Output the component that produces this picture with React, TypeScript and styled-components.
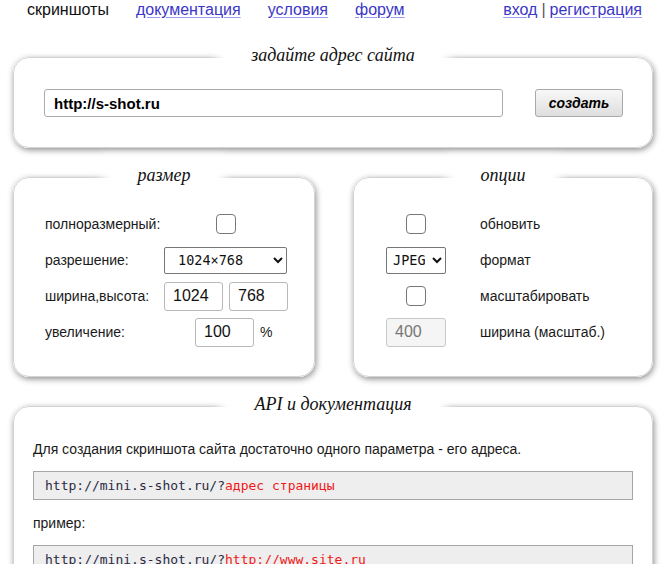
import styled, { createGlobalStyle } from "styled-components";

const GlobalStyle = createGlobalStyle`
    html, body {
        margin: 0;
        padding: 0;
        background: #fff;
    }
    body {
        font-family: "Liberation Sans", Arial, sans-serif;
        color: #111;
    }
`;

const Page = styled.div`
    margin: 0 11px 0 13px;
`;

const TopNav = styled.nav`
    display: flex;
    align-items: center;
    height: 20px;
    padding: 0 22px 0 27px;
    font-size: 16px;
    line-height: 20px;
`;

const NavGroup = styled.div`
    display: flex;
    gap: 27px;
`;

const AuthGroup = styled.div`
    margin-left: auto;
    display: flex;
    gap: 4px;
`;

const Current = styled.span`
    color: #111;
`;

const NavLink = styled.a`
    color: #3a36c8;
    text-decoration: underline;
    text-decoration-color: #9a9af0;
    text-underline-offset: 2px;
`;

const Separator = styled.span`
    color: #555;
`;

const Panel = styled.fieldset<{ $top?: number }>`
    margin: ${(p) => p.$top ?? 17}px 0 0 0;
    padding: 0;
    min-width: 0;
    border: 1px solid #d4d4d4;
    border-radius: 16px;
    box-shadow: 1px 2px 6px rgba(0, 0, 0, 0.45);
    background: #fff;
`;

const Legend = styled.legend`
    margin: 0 auto;
    padding: 0 26px 4px 26px;
    background: #fff;
    box-shadow: 0 0 10px 8px #fff;
    font-family: "Liberation Serif", "Times New Roman", serif;
    font-style: italic;
    font-size: 18px;
    line-height: 20px;
    color: #111;
`;

const UrlRow = styled.div`
    display: flex;
    gap: 32px;
    padding: 20px 29px 30px 30px;
`;

const UrlInput = styled.input`
    flex: 1;
    box-sizing: border-box;
    height: 28px;
    padding: 0 9px;
    border: 1px solid #ababab;
    border-radius: 3px;
    font-family: "Liberation Sans", Arial, sans-serif;
    font-weight: bold;
    font-size: 15px;
    color: #000;
    outline: none;
`;

const CreateButton = styled.button`
    box-sizing: border-box;
    width: 88px;
    height: 28px;
    border: 1px solid #a9a9a9;
    border-radius: 3px;
    background: linear-gradient(#f8f8f8, #dedede);
    font-family: "Liberation Sans", Arial, sans-serif;
    font-weight: bold;
    font-style: italic;
    font-size: 14px;
    color: #000;
`;

const Columns = styled.div`
    display: grid;
    grid-template-columns: 302px 300px;
    justify-content: space-between;
`;

const FormGrid = styled.div<{ $cols: string; $gap: number; $pad: number }>`
    display: grid;
    grid-template-columns: ${(p) => p.$cols};
    column-gap: ${(p) => p.$gap}px;
    grid-auto-rows: 36px;
    align-items: center;
    padding: 17px 0 26px ${(p) => p.$pad}px;
    font-size: 14px;
    color: #1a1a1a;
`;

const Cell = styled.div<{ $center?: boolean; $indent?: number }>`
    display: flex;
    align-items: center;
    gap: 6px;
    justify-content: ${(p) => (p.$center ? "center" : "flex-start")};
    padding-left: ${(p) => p.$indent ?? 0}px;
`;

const Check = styled.input.attrs({ type: "checkbox" })`
    appearance: none;
    margin: 0;
    width: 20px;
    height: 20px;
    box-sizing: border-box;
    border: 1px solid #777;
    border-radius: 4px;
    background: #fff;
`;

const Select = styled.select<{ $w: number }>`
    width: ${(p) => p.$w}px;
    height: 27px;
    margin: 0;
    padding: 0 4px 0 ${(p) => (p.$w > 100 ? 9 : 2)}px;
    border: 1px solid #767676;
    border-radius: 2px;
    background: #fff;
    font-family: "DejaVu Sans Mono", monospace;
    font-size: 13.5px;
    color: #111;
`;

const NumInput = styled.input<{ $w?: number }>`
    box-sizing: border-box;
    width: ${(p) => p.$w ?? 59}px;
    height: 29px;
    margin: 0;
    padding: 0 8px;
    border: 1px solid #b8b8b8;
    border-radius: 3px;
    background: #fff;
    font-family: "Liberation Sans", Arial, sans-serif;
    font-size: 16px;
    color: #111;
    &:disabled {
        background: #f5f5f5;
        color: #777;
        border-color: #c8c8c8;
    }
`;

const DocBody = styled.div`
    padding: 23px 19px 40px 19px;
    font-size: 14px;
    line-height: 16px;
    color: #1a1a1a;
`;

const Para = styled.p`
    margin: 0 0 14px 0;
`;

const Code = styled.div`
    margin: 0 0 15px 0;
    padding: 5px 11px;
    border: 1px solid #a6a6a6;
    background: #eeeeee;
    font-family: "DejaVu Sans Mono", monospace;
    font-size: 13px;
    line-height: 17px;
    color: #2a2a44;
`;

const Param = styled.span`
    color: #f01818;
`;

export default function App() {
    return (
        <>
            <GlobalStyle />
            <TopNav>
                <NavGroup>
                    <Current>скриншоты</Current>
                    <NavLink href="#">документация</NavLink>
                    <NavLink href="#">условия</NavLink>
                    <NavLink href="#">форум</NavLink>
                </NavGroup>
                <AuthGroup>
                    <NavLink href="#">вход</NavLink>
                    <Separator>|</Separator>
                    <NavLink href="#">регистрация</NavLink>
                </AuthGroup>
            </TopNav>
            <Page>
                <Panel $top={25}>
                    <Legend align="center">задайте адрес сайта</Legend>
                    <UrlRow>
                        <UrlInput defaultValue="http://s-shot.ru" />
                        <CreateButton>создать</CreateButton>
                    </UrlRow>
                </Panel>

                <Columns>
                    <Panel>
                        <Legend align="center">размер</Legend>
                        <FormGrid $cols="119px 123px" $gap={0} $pad={31}>
                            <span>полноразмерный:</span>
                            <Cell $center>
                                <Check />
                            </Cell>
                            <span>разрешение:</span>
                            <Cell>
                                <Select $w={123} defaultValue="1024x768">
                                    <option value="1024x768">1024×768</option>
                                    <option value="1280x1024">1280×1024</option>
                                </Select>
                            </Cell>
                            <span>ширина,высота:</span>
                            <Cell>
                                <NumInput defaultValue="1024" />
                                <NumInput defaultValue="768" />
                            </Cell>
                            <span>увеличение:</span>
                            <Cell $indent={31}>
                                <NumInput defaultValue="100" />
                                <span>%</span>
                            </Cell>
                        </FormGrid>
                    </Panel>

                    <Panel>
                        <Legend align="center">опции</Legend>
                        <FormGrid $cols="60px 1fr" $gap={34} $pad={32}>
                            <Cell $center>
                                <Check />
                            </Cell>
                            <span>обновить</span>
                            <Cell>
                                <Select $w={60} defaultValue="jpeg">
                                    <option value="jpeg">JPEG</option>
                                    <option value="png">PNG</option>
                                </Select>
                            </Cell>
                            <span>формат</span>
                            <Cell $center>
                                <Check />
                            </Cell>
                            <span>масштабировать</span>
                            <Cell>
                                <NumInput $w={60} defaultValue="400" disabled />
                            </Cell>
                            <span>ширина (масштаб.)</span>
                        </FormGrid>
                    </Panel>
                </Columns>

                <Panel>
                    <Legend align="center">API и документация</Legend>
                    <DocBody>
                        <Para>
                            Для создания скриншота сайта достаточно одного
                            параметра - его адреса.
                        </Para>
                        <Code>
                            http://mini.s-shot.ru/?<Param>адрес страницы</Param>
                        </Code>
                        <Para>пример:</Para>
                        <Code>
                            http://mini.s-shot.ru/?<Param>http://www.site.ru</Param>
                        </Code>
                    </DocBody>
                </Panel>
            </Page>
        </>
    );
}
